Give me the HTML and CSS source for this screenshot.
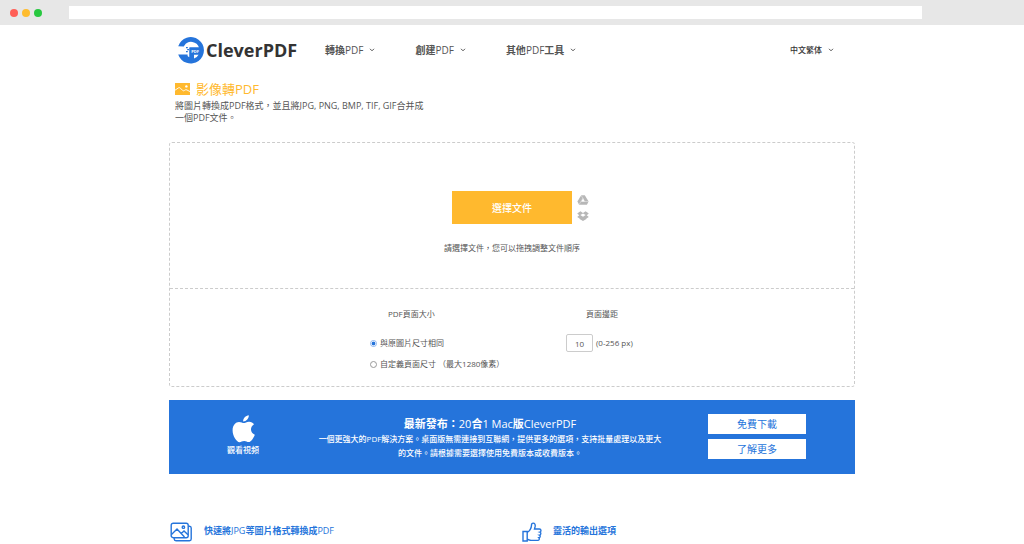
FILE: index.html
```html
<!DOCTYPE html>
<html lang="zh-Hant">
<head>
<meta charset="utf-8">
<meta name="viewport" content="width=device-width, initial-scale=1">
<title>影像轉PDF - CleverPDF</title>
<link rel="stylesheet" href="styles.css">
</head>
<body>
<div class="browser-bar">
  <div class="lights"><span class="light red"></span><span class="light amber"></span><span class="light green"></span></div>
  <input class="address" type="text" aria-label="Address">
</div>
<div class="container">
  <header class="site-header">
    <a class="logo" href="#">
      <svg width="28" height="28" viewBox="0 0 28 28" aria-hidden="true">
        <path d="M1.2 10.2A13.2 13.2 0 1 1 1.2 18.4H10.6V20A8 8 0 0 0 12.5 21.3V11.6H22A8.2 8.2 0 0 0 7.4 9.4L6.8 10.4Z" fill="#2574db"/>
        <path d="M9 11h1.8v1.3H9zM10.2 13h1.8v1.3h-1.8zM9 15h1.8v1.3H9z" fill="#2574db"/>
        <path d="M12.5 11.6H23V18H16V22H12.5Z" fill="#2574db"/>
        <path d="M17 18.8H21.6Q20.3 21.5 17 22.4Z" fill="#fff"/>
        <text x="14.3" y="16.6" class="logo-badge">PDF</text>
      </svg>
      <span>CleverPDF</span>
    </a>
    <nav class="main-nav">
      <a href="#"><span>轉換<span class="latin">PDF</span></span><svg class="chevron" viewBox="0 0 6 4"><path d="M1 .8L3 2.8L5 .8"/></svg></a>
      <a href="#"><span>創建<span class="latin">PDF</span></span><svg class="chevron" viewBox="0 0 6 4"><path d="M1 .8L3 2.8L5 .8"/></svg></a>
      <a href="#"><span>其他<span class="latin">PDF</span>工具</span><svg class="chevron" viewBox="0 0 6 4"><path d="M1 .8L3 2.8L5 .8"/></svg></a>
    </nav>
    <button class="language" type="button">中文繁体<svg class="chevron" viewBox="0 0 6 4"><path d="M1 .8L3 2.8L5 .8"/></svg></button>
  </header>
  <main>
    <section class="intro">
      <h1><svg width="15" height="12" viewBox="0 0 15 12" aria-hidden="true"><rect width="15" height="12" fill="#ffb92e"/><path d="M0 7.2L3.6 4.8Q4.5 4.3 5.4 5.2L7.6 7.4Q8.5 8.2 9.5 7.4L10.3 6.9Q11 6.5 12 7L15 8.6" fill="none" stroke="#fff" stroke-width=".9"/><circle cx="11.4" cy="3.4" r="1.2" fill="#fff"/></svg>影像轉PDF</h1>
      <p>將圖片轉換成PDF格式，並且將JPG, PNG, BMP, TIF, GIF合并成一個PDF文件。</p>
    </section>
    <form class="panel">
      <div class="upload">
        <div class="picker">
          <button class="choose" type="button">選擇文件</button>
          <div class="sources">
            <button type="button" aria-label="Google Drive"><svg width="12" height="10" viewBox="0 0 12 10"><path d="M4.2 .3H7.8L11.6 6.6L9.9 9.7H2.1L.4 6.6Z" fill="#b7b7b7"/><path d="M6 3.6L4.4 6.4H7.6Z" fill="#fff"/><path d="M4.2 .5L7.7 6.5H11.4M2.1 9.5L6 3.2M4.3 6.5H7.8" fill="none" stroke="#fff" stroke-width=".4"/></svg></button>
            <button type="button" aria-label="Dropbox"><svg width="12" height="10" viewBox="0 0 12 10"><path d="M3.4 .2L6 2L8.6 .2L11.8 2.4L9.7 4.2L11.8 5.9L9.4 7.5V8L6 10L2.6 8V7.5L.2 5.9L2.3 4.2L.2 2.4Z" fill="#b7b7b7"/><path d="M6 2.4L8.7 4.1L6 5.8L3.3 4.1Z" fill="#fff"/></svg></button>
          </div>
        </div>
        <p class="hint">請選擇文件，您可以拖拽調整文件順序</p>
      </div>
      <div class="options">
        <fieldset class="page-size">
          <legend>PDF頁面大小</legend>
          <label><input type="radio" name="size" checked>與原圖片尺寸相同</label>
          <label><input type="radio" name="size">自定義頁面尺寸 （最大1280像素）</label>
        </fieldset>
        <div class="margin">
          <label for="margin">頁面邊距</label>
          <div class="margin-row"><input id="margin" type="text" value="10"><span>(0-256 px)</span></div>
        </div>
      </div>
    </form>
    <section class="promo">
      <a class="video" href="#">
        <svg width="23" height="28" viewBox="0 0 23 28" aria-hidden="true"><path fill="#fff" d="M16.8.3C17 3.4 14.4 6.4 11.2 6.5C10.9 3.5 13.8.5 16.8.3ZM11.8 8.1C13 8.1 14.8 6.6 17.2 6.7C19.2 6.8 20.9 7.6 22 9.2C17.6 12 18.2 17.8 22.8 19.7C21.8 22.6 19.3 27 16.7 27.1C14.9 27.1 14.3 26 12.2 26C10 26 9.3 27.1 7.6 27.2C4.4 27.2.6 20.6.6 15.5C.6 10 3.8 7.1 7 7C9.2 7 10.7 8.1 11.8 8.1Z"/></svg>
        <span>觀看視頻</span>
      </a>
      <div class="promo-text">
        <h2>最新發布：<span class="latin">20</span>合<span class="latin">1 Mac</span>版<span class="latin">CleverPDF</span></h2>
        <p>一個更強大的PDF解決方案。桌面版無需連接到互聯網，提供更多的選項，支持批量處理以及更大的文件。請根據需要選擇使用免費版本或收費版本。</p>
      </div>
      <div class="promo-actions"><a href="#">免費下載</a><a href="#">了解更多</a></div>
    </section>
    <section class="features">
      <h3><svg width="23" height="20" viewBox="0 0 23 20" aria-hidden="true"><rect x="1.2" y="1.2" width="17" height="14.5" rx="2"/><path d="M18.5 4.2H19.5Q21.2 4.2 21.2 6V17Q21.2 18.7 19.5 18.7H6Q4.2 18.7 4.2 17V16M1.5 12.5L7 7L14.5 15M11.3 11.5L14 9L18 12.8"/><circle cx="13.4" cy="5.2" r="1.2"/></svg><span>快速將<span class="latin">JPG</span>等圖片格式轉換成<span class="latin">PDF</span></span></h3>
      <h3><svg width="20" height="20" viewBox="0 0 20 20" aria-hidden="true"><path d="M1 9.5H5.2V19H1ZM5.2 10.5C7.5 9 9.3 6.4 9.5 3.2C9.5 1.8 10.2 1.1 11.2 1.1C12.7 1.1 13.4 2.5 13.2 4.2L12.5 7H17.4C19.3 7 19.5 9.7 17.9 10.1C19.3 10.6 19.1 12.9 17.5 13.1C18.7 13.7 18.3 15.7 16.9 15.8C17.8 16.6 17.2 18.4 15.7 18.4H9C7.5 18.4 6.7 17.4 5.2 17.3"/></svg>靈活的輸出選項</h3>
    </section>
  </main>
</div>
</body>
</html>
```

FILE: styles.css
```css
* { box-sizing: border-box; }
body {
  margin: 0;
  background: #fff;
  color: #555;
  font: 8px/12px "Open Sans", "Noto Sans CJK TC", sans-serif;
}
h1, h2, h3, p { margin: 0; }
a { color: inherit; text-decoration: none; }
button, input { font: inherit; color: inherit; }
button { border: 0; padding: 0; background: none; cursor: pointer; }
svg { display: block; flex: none; }
.latin { font-weight: 500; }

.browser-bar {
  display: flex;
  align-items: center;
  height: 25px;
  padding: 0 10% 0 10px;
  background: #e7e7e7;
}
.lights { display: flex; gap: 4px; width: 59px; flex: none; }
.light { width: 8px; height: 8px; border-radius: 50%; }
.red { background: #ff5f57; }
.amber { background: #febc2e; }
.green { background: #28c840; }
.address { flex: 1; height: 13px; border: 0; background: #fff; }

.container { max-width: 686px; margin: 0 auto; }

.site-header {
  display: flex;
  align-items: center;
  height: 49px;
  padding: 0 21px 0 8px;
}
.logo {
  display: flex;
  align-items: center;
  gap: 1px;
  width: 148px;
  color: #333;
  font-size: 18px;
  font-weight: 700;
  line-height: 28px;
}
.logo-badge { fill: #fff; font-size: 4px; font-weight: 700; }
.main-nav { display: flex; gap: 40px; font-size: 10px; font-weight: 700; }
.main-nav a, .language { display: flex; align-items: center; gap: 6px; }
.language { margin-left: auto; color: #333; font-weight: 500; }
.chevron { width: 6px; height: 4px; fill: none; stroke: #555; }

.intro { padding: 6px 6px 0; }
.intro h1 {
  display: flex;
  align-items: center;
  gap: 6px;
  color: #ffb92e;
  font-size: 13px;
  font-weight: 400;
  line-height: 18px;
}
.intro p { max-width: 254px; padding-top: 2px; font-size: 9px; }

.panel { margin-top: 18px; border: 1px dashed #ccc; border-radius: 3px; }
.upload {
  display: flex;
  flex-direction: column;
  align-items: center;
  gap: 18px;
  padding: 48px 0 34px;
  border-bottom: 1px dashed #ccc;
}
.picker { display: flex; gap: 5px; padding-left: 17px; }
.choose {
  width: 120px;
  height: 33px;
  background: #ffb92e;
  color: #fff;
  font-size: 10px;
  font-weight: 500;
}
.sources { display: flex; flex-direction: column; justify-content: center; gap: 6px; }
.options { display: grid; grid-template-columns: 366px 1fr; padding: 19px 0 16px; }
.page-size { margin: 0; padding: 0 0 0 200px; border: 0; }
.page-size legend { padding: 0 0 0 18px; margin-bottom: 17px; }
.page-size label { display: flex; align-items: center; gap: 3px; margin-bottom: 9px; white-space: nowrap; }
.page-size label:last-child { margin-bottom: 0; }
.page-size input {
  appearance: none;
  width: 7px;
  height: 7px;
  margin: 0;
  border: 1px solid #999;
  border-radius: 50%;
}
.page-size input:checked { border-color: #8ab4f0; background: radial-gradient(#2574db 50%, #fff 60%); }
.margin { padding-left: 30px; }
.margin > label { display: block; padding-left: 20px; margin-bottom: 14px; }
.margin-row { display: flex; align-items: center; gap: 3px; }
.margin input {
  width: 27px;
  height: 18px;
  padding: 0;
  border: 1px solid #ccc;
  border-radius: 2px;
  text-align: center;
}

.promo {
  display: grid;
  grid-template-columns: 148px 1fr 192px;
  min-height: 74px;
  margin-top: 13px;
  background: #2574db;
  color: #fff;
}
.video {
  display: flex;
  flex-direction: column;
  align-items: center;
  gap: 1px;
  padding-top: 15px;
  font-weight: 500;
}
.promo-text { padding-top: 15px; text-align: center; font-weight: 500; }
.promo-text h2 { font-size: 11px; font-weight: 700; line-height: 17px; }
.promo-text p { line-height: 14px; }
.promo-actions {
  display: flex;
  flex-direction: column;
  align-items: center;
  gap: 5px;
  padding: 14px 4px 0 0;
}
.promo-actions a {
  width: 98px;
  background: #fff;
  color: #2574db;
  font-size: 10px;
  line-height: 20px;
  text-align: center;
}

.features { display: grid; grid-template-columns: 352px 1fr; padding-top: 48px; color: #2574db; }
.features h3 { display: flex; gap: 11px; padding-left: 1px; font-size: 9px; font-weight: 700; line-height: 18px; }
.features svg { fill: none; stroke: #2574db; stroke-width: 1.4; }
```
